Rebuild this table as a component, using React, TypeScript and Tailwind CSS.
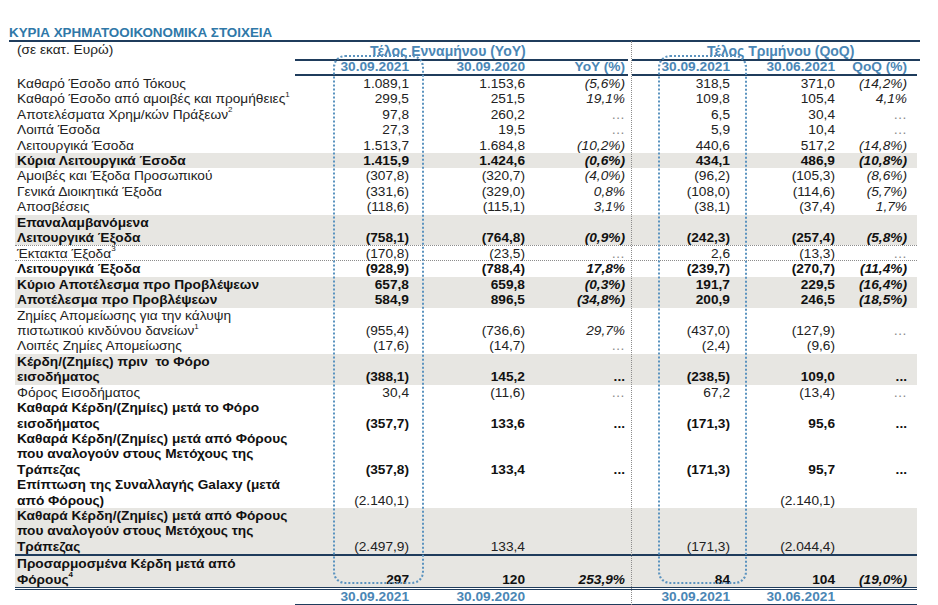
import React from "react";

type Row = {
  label: React.ReactNode;
  v: string[];
  b?: boolean;
  vb?: boolean;
  s?: boolean;
  dotted?: boolean;
};

const Sup = ({ n }: { n: string }) => (
  <sup className="text-[8px] relative -top-[1px] align-super leading-none">{n}</sup>
);

const rows: Row[] = [
  { label: "Καθαρό Έσοδο από Τόκους", v: ["1.089,1", "1.153,6", "(5,6%)", "318,5", "371,0", "(14,2%)"] },
  { label: <>Καθαρό Έσοδο από αμοιβές και προμήθειες<Sup n="1" /></>, v: ["299,5", "251,5", "19,1%", "109,8", "105,4", "4,1%"] },
  { label: <>Αποτελέσματα Χρημ/κών Πράξεων<Sup n="2" /></>, v: ["97,8", "260,2", "…", "6,5", "30,4", "…"] },
  { label: "Λοιπά Έσοδα", v: ["27,3", "19,5", "…", "5,9", "10,4", "…"] },
  { label: "Λειτουργικά Έσοδα", v: ["1.513,7", "1.684,8", "(10,2%)", "440,6", "517,2", "(14,8%)"] },
  { label: "Κύρια Λειτουργικά Έσοδα", b: true, s: true, v: ["1.415,9", "1.424,6", "(0,6%)", "434,1", "486,9", "(10,8%)"] },
  { label: "Αμοιβές και Έξοδα Προσωπικού", v: ["(307,8)", "(320,7)", "(4,0%)", "(96,2)", "(105,3)", "(8,6%)"] },
  { label: "Γενικά Διοικητικά Έξοδα", v: ["(331,6)", "(329,0)", "0,8%", "(108,0)", "(114,6)", "(5,7%)"] },
  { label: "Αποσβέσεις", v: ["(118,6)", "(115,1)", "3,1%", "(38,1)", "(37,4)", "1,7%"] },
  { label: <>Επαναλαμβανόμενα<br />Λειτουργικά Έξοδα</>, b: true, s: true, v: ["(758,1)", "(764,8)", "(0,9%)", "(242,3)", "(257,4)", "(5,8%)"] },
  { label: <>Έκτακτα Έξοδα<Sup n="3" /></>, dotted: true, v: ["(170,8)", "(23,5)", "…", "2,6", "(13,3)", "…"] },
  { label: "Λειτουργικά Έξοδα", b: true, v: ["(928,9)", "(788,4)", "17,8%", "(239,7)", "(270,7)", "(11,4%)"] },
  { label: "Κύριο Αποτέλεσμα προ Προβλέψεων", b: true, s: true, v: ["657,8", "659,8", "(0,3%)", "191,7", "229,5", "(16,4%)"] },
  { label: "Αποτέλεσμα προ Προβλέψεων", b: true, s: true, v: ["584,9", "896,5", "(34,8%)", "200,9", "246,5", "(18,5%)"] },
  { label: <>Ζημίες Απομείωσης για την κάλυψη<br />πιστωτικού κινδύνου δανείων<Sup n="1" /></>, v: ["(955,4)", "(736,6)", "29,7%", "(437,0)", "(127,9)", "…"] },
  { label: "Λοιπές Ζημίες Απομείωσης", v: ["(17,6)", "(14,7)", "…", "(2,4)", "(9,6)", ""] },
  { label: <>Κέρδη/(Ζημίες) πριν&nbsp; το Φόρο<br />εισοδήματος</>, b: true, s: true, v: ["(388,1)", "145,2", "...", "(238,5)", "109,0", "..."] },
  { label: "Φόρος Εισοδήματος", v: ["30,4", "(11,6)", "…", "67,2", "(13,4)", "…"] },
  { label: <>Καθαρά Κέρδη/(Ζημίες) μετά το Φόρο<br />εισοδήματος</>, b: true, v: ["(357,7)", "133,6", "...", "(171,3)", "95,6", "..."] },
  { label: <>Καθαρά Κέρδη/(Ζημίες) μετά από Φόρους<br />που αναλογούν στους Μετόχους της<br />Τράπεζας</>, b: true, v: ["(357,8)", "133,4", "...", "(171,3)", "95,7", "..."] },
  { label: <>Επίπτωση της Συναλλαγής Galaxy (μετά<br />από Φόρους)</>, b: true, vb: false, v: ["(2.140,1)", "", "", "", "(2.140,1)", ""] },
  { label: <>Καθαρά Κέρδη/(Ζημίες) μετά από Φόρους<br />που αναλογούν στους Μετόχους της<br />Τράπεζας</>, b: true, vb: false, s: true, v: ["(2.497,9)", "133,4", "", "(171,3)", "(2.044,4)", ""] },
];

const last: Row = {
  label: <>Προσαρμοσμένα Κέρδη μετά από<br />Φόρους<Sup n="4" /></>,
  b: true,
  s: true,
  v: ["297", "120", "253,9%", "84", "104", "(19,0%)"],
};

const pads = ["pr-[2px]", "pr-[2px]", "pr-[7px]", "pr-[2px]", "pr-[2px]", "pr-[10px]"];

function DataRow({ r, extra = "" }: { r: Row; extra?: string }) {
  const valBold = r.vb === undefined ? !!r.b : r.vb;
  return (
    <div
      className={`grid grid-cols-[280px_116px_116px_105px_100px_105px_80px] items-end ${
        r.s ? "bg-[#e7e6e2]" : ""
      } ${r.dotted ? "border-y border-dotted border-[#8c8c8c] leading-[13.4px]" : ""} ${extra}`}
    >
      <div className={`pl-[2px] whitespace-nowrap ${r.b ? "font-bold text-[#111]" : ""}`}>{r.label}</div>
      {r.v.map((v, i) => {
        const pct = i === 2 || i === 5;
        const ell = v === "…";
        const bEll = v === "...";
        return (
          <div
            key={i}
            className={`text-right whitespace-nowrap ${pads[i]} ${pct ? "italic" : ""} ${
              valBold || bEll ? "font-bold text-[#111]" : ""
            } ${ell ? "text-[#8a8a8a] not-italic" : ""} ${bEll ? "not-italic" : ""}`}
          >
            {v}
          </div>
        );
      })}
    </div>
  );
}

export default function App() {
  return (
    <div className="relative w-[938px] h-[605px] bg-white overflow-hidden font-['Liberation_Sans',Arial,sans-serif] text-[13.7px] leading-[15.4px] text-[#222]">
      {/* Title */}
      <div className="ml-[9px] w-[911px] pt-[26px] border-b-2 border-[#1f3c5c]">
        <div className="text-[13.4px] font-bold leading-[14px] text-[#2f78a8] whitespace-nowrap">
          ΚΥΡΙΑ ΧΡΗΜΑΤΟΟΙΚΟΝΟΜΙΚΑ ΣΤΟΙΧΕΙΑ
        </div>
      </div>

      {/* Group header */}
      <div className="ml-[15px] grid grid-cols-[280px_337px_288px] h-[17px] leading-[16px]">
        <div className="pl-[2px] whitespace-nowrap">(σε εκατ. Ευρώ)</div>
        <div className="mr-[4px] border-b-2 border-[#1f3c5c] pl-[75px] pt-[1px] text-[14px] font-bold text-[#4a86b5] whitespace-nowrap">
          Τέλος Ενναμήνου (YoY)
        </div>
        <div className="border-b-2 border-[#1f3c5c] pl-[75px] pt-[1px] text-[14px] font-bold text-[#4a86b5] whitespace-nowrap">
          Τέλος Τριμήνου (QoQ)
        </div>
      </div>

      {/* Date header */}
      <div className="ml-[15px] grid grid-cols-[280px_337px_285px] h-[17px] leading-[15px] font-bold text-[#4a86b5]">
        <div />
        <div className="mr-[4px] border-b-2 border-[#1f3c5c] grid grid-cols-[116px_116px_101px]">
          <div className="text-right pr-[2px]">30.09.2021</div>
          <div className="text-right pr-[2px]">30.09.2020</div>
          <div className="text-right pr-[3px]">YoY (%)</div>
        </div>
        <div className="border-b-2 border-[#1f3c5c] grid grid-cols-[100px_105px_80px]">
          <div className="text-right pr-[2px]">30.09.2021</div>
          <div className="text-right pr-[2px]">30.06.2021</div>
          <div className="text-right pr-[10px]">QoQ (%)</div>
        </div>
      </div>

      {/* Body */}
      <div className="ml-[15px] w-[902px]">
        {rows.map((r, i) => (
          <DataRow key={i} r={r} />
        ))}
        <DataRow r={last} extra="border-t-2 border-[#1f3c5c]" />
        <div className="border-b-[3px] border-double border-[#1f3c5c]" />
        <div className="grid grid-cols-[280px_622px] h-[16px] leading-[14px] font-bold text-[#4a86b5]">
          <div />
          <div className="border-b-2 border-[#1f3c5c] grid grid-cols-[116px_116px_105px_100px_105px_80px]">
            <div className="text-right pr-[2px]">30.09.2021</div>
            <div className="text-right pr-[2px]">30.09.2020</div>
            <div />
            <div className="text-right pr-[2px]">30.09.2021</div>
            <div className="text-right pr-[2px]">30.06.2021</div>
            <div />
          </div>
        </div>
      </div>

      {/* Overlays: vertical divider and highlight boxes */}
      <div className="absolute left-[631px] top-[41px] h-[564px] border-l border-dotted border-[#8c8c8c]" />
      <div className="absolute left-[333px] top-[55px] w-[91px] h-[529px] border-2 border-dotted border-[#5b93bf] rounded-[12px]" />
      <div className="absolute left-[658px] top-[55px] w-[89px] h-[529px] border-2 border-dotted border-[#5b93bf] rounded-[12px]" />
    </div>
  );
}
